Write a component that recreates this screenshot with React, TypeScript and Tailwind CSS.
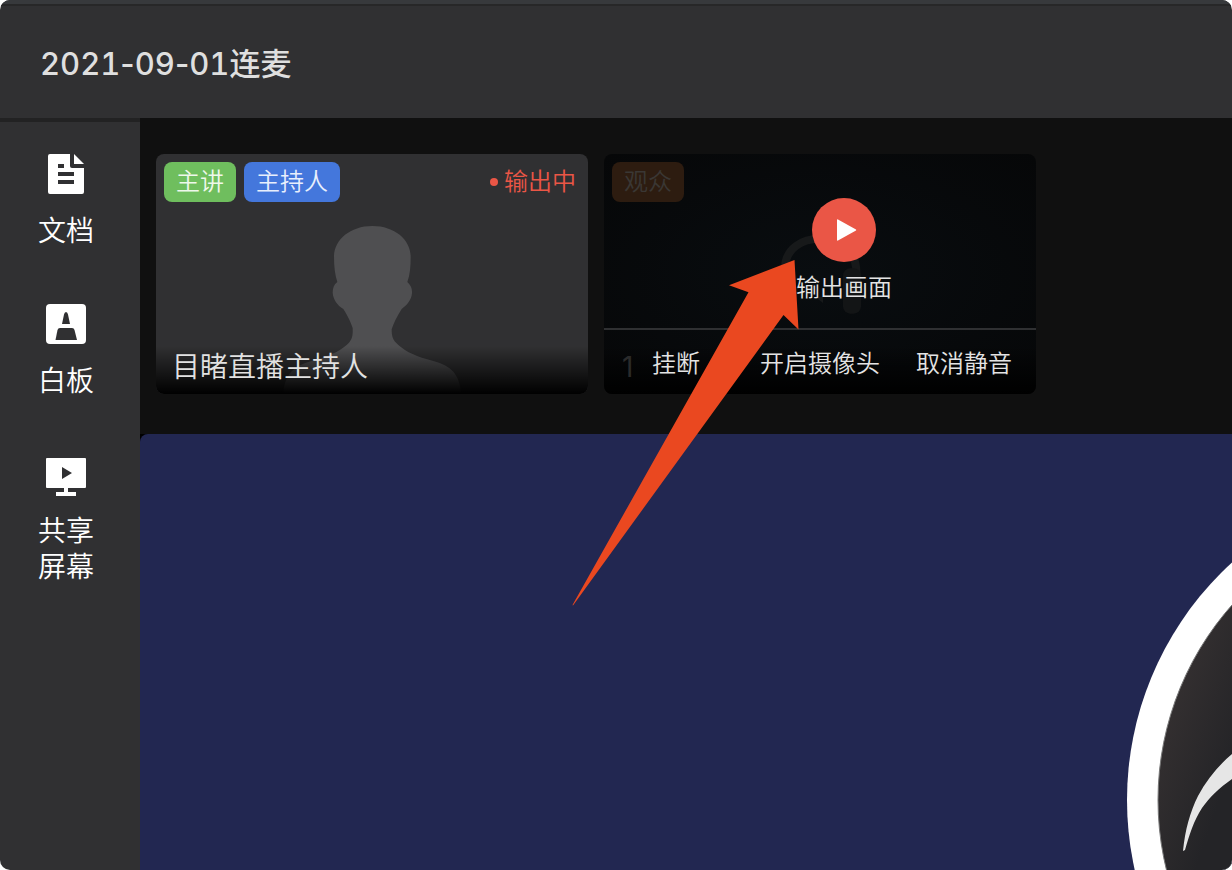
import type { ReactNode } from 'react';

function DocumentIcon() {
  return (
    <svg viewBox="0 0 40 40" className="h-10 w-10" fill="#fff" aria-hidden="true">
      <path
        fillRule="evenodd"
        d="M4 0H24V12Q24 14 26 14H38V38Q38 40 36 40H4Q2 40 2 38V2Q2 0 4 0ZM12 10V14H18V10ZM12 18V22H28V18ZM12 26V30H28V26Z"
      />
      <path d="M28 0L38 10H28Z" />
    </svg>
  );
}

function WhiteboardIcon() {
  return (
    <svg viewBox="0 0 40 40" className="h-10 w-10" aria-hidden="true">
      <rect width="40" height="40" rx="4" fill="#fff" />
      <path d="M16 20L18 10.500Q18.500 8 20 8Q21.500 8 22 10.500L24 20Z" fill="#303032" />
      <path d="M9.500 36L11.500 26Q12 24 14 24H26Q28 24 28.500 26L31 36Z" fill="#303032" />
    </svg>
  );
}

function ScreenIcon() {
  return (
    <svg viewBox="0 0 40 40" className="h-10 w-10 overflow-visible" fill="#fff" aria-hidden="true">
      <path
        fillRule="evenodd"
        d="M1 4H39Q40 4 40 5V33Q40 34 39 34H22V38H30V42H10V38H18V34H1Q0 34 0 33V5Q0 4 1 4ZM16 13V25L26 19Z"
      />
    </svg>
  );
}

function Tool({ icon, children }: { icon: ReactNode; children: ReactNode }) {
  return (
    <button type="button" className="flex w-[132px] flex-col items-center gap-[19px] text-[28px] leading-9 font-[350] text-white">
      {icon}
      <span>{children}</span>
    </button>
  );
}

function Tag({ className, children }: { className: string; children: ReactNode }) {
  return <span className={`flex h-10 items-center rounded-lg px-3 text-2xl font-[350] ${className}`}>{children}</span>;
}

function HostCard() {
  return (
    <article className="relative h-60 w-[432px] shrink-0 overflow-hidden rounded-lg bg-[#303032]">
      <svg viewBox="18 27 1296 720" className="absolute inset-0 h-full w-full" aria-hidden="true">
        <path
          fill="#4f4f51"
          d="M667 243C735 243 782 285 782 335C782 365 780 390 772 411C782 420 787 430 786 445C784 465 772 480 755 492C740 515 730 537 725 553C725 575 728 585 745 600C770 622 800 635 850 648C905 662 930 690 933 747H400C403 690 430 662 485 648C530 635 565 622 590 600C606 585 609 575 608 549C602 532 595 515 580 492C562 480 550 465 548 443C548 430 552 418 562 411C555 390 552 365 552 335C552 285 600 243 667 243Z"
        />
      </svg>
      <div className="relative flex items-center gap-2 p-2">
        <Tag className="bg-[#6fbe5e] text-[#eef8eb]">主讲</Tag>
        <Tag className="bg-[#4477dc] text-[#e8effc]">主持人</Tag>
        <span className="ml-auto flex items-center gap-1.5 pr-1 text-2xl font-[350] text-[#ea5646]">
          <i className="h-2 w-2 rounded-full bg-[#ea5646]" />
          输出中
        </span>
      </div>
      <div className="absolute inset-x-0 bottom-0 h-12 bg-linear-to-b from-transparent to-black px-4 text-[28px] leading-[42px] font-[350] text-[#e2e2e2]">
        目睹直播主持人
      </div>
    </article>
  );
}

function AudienceCard() {
  return (
    <article className="relative flex h-60 w-[432px] shrink-0 flex-col overflow-hidden rounded-lg bg-radial from-[#090d10] to-[#060708]">
      <svg viewBox="27 27 1296 720" className="absolute inset-0 h-full w-full" aria-hidden="true">
        <path d="M570 380V370C570 250 784 250 784 380V400" fill="none" stroke="#17191a" strokeWidth="24" />
        <rect x="744" y="370" width="54" height="136" rx="22" fill="#131516" />
        <path d="M660 455H684V474Z" fill="#17191a" />
      </svg>
      <div className="absolute inset-x-0 bottom-0 h-12 bg-linear-to-b from-transparent to-black px-[18px] text-[28px] leading-[42px] text-[#2b2b2b]">
        1
      </div>
      <div className="absolute top-2 left-2">
        <Tag className="bg-[#2d1c10] text-[#3a3734]">观众</Tag>
      </div>
      <div className="relative flex flex-1 flex-col items-center pt-11 pl-12">
        <button type="button" className="flex flex-col items-center gap-2 text-2xl leading-9 font-[350] text-[#e4e4e4]">
          <span className="flex h-16 w-16 items-center justify-center rounded-full bg-[#ea5646]">
            <svg viewBox="0 0 64 64" className="h-16 w-16" aria-hidden="true">
              <path d="M26 21.500L44 31.500Q44.500 32 44 32.500L26 42.500Q25 43 25 42V22Q25 21 26 21.500Z" fill="#fff" />
            </svg>
          </span>
          输出画面
        </button>
      </div>
      <div className="relative grid h-[66px] grid-cols-3 border-t-2 border-[#2f3032] pt-1 text-2xl font-[350] text-[#e4e4e4]">
        <button type="button">挂断</button>
        <button type="button" className="whitespace-nowrap">开启摄像头</button>
        <button type="button">取消静音</button>
      </div>
    </article>
  );
}

function Stage() {
  return (
    <section className="flex flex-1 bg-black">
      <div className="flex flex-1 justify-end overflow-hidden rounded-tl-lg bg-[#222751]">
        <svg viewBox="1112 434 120 436" className="h-[436px] w-[120px]" aria-hidden="true">
          <defs>
            <linearGradient id="disc" gradientUnits="userSpaceOnUse" x1="1160" y1="740" x2="1232" y2="765">
              <stop offset="0" stopColor="#332f30" />
              <stop offset="1" stopColor="#242427" />
            </linearGradient>
          </defs>
          <circle cx="1448" cy="800" r="321" fill="#fff" />
          <circle cx="1452" cy="800" r="294" fill="url(#disc)" stroke="#777" strokeWidth="1" />
          <path d="M1183 851C1185 830 1190 812 1198 796C1207 779 1219 765 1232 754V779C1219 788 1210 797 1202 808C1194 820 1189 836 1185 850Z" fill="#e6e6e6" />
        </svg>
      </div>
    </section>
  );
}

export default function App() {
  return (
    <div className="bg-white">
      <div className="flex min-h-screen flex-col overflow-hidden rounded-[10px] bg-[#303032] font-['Inter','Noto_Sans_CJK_SC',sans-serif]">
        <div className="h-1.5 border-b-2 border-[#272728] bg-[#37393c]" />
        <header className="flex h-28 items-center px-10 pt-1">
          <h1 className="text-[31px] font-medium text-[#dfdfdf]">
            <span className="tabular-nums">2021</span>-<span className="tabular-nums">09</span>-
            <span className="tabular-nums">01</span>连麦
          </h1>
        </header>
        <div className="flex flex-1">
          <nav className="flex w-[140px] shrink-0 flex-col gap-[55px] border-t-4 border-[#222223] pt-8">
            <Tool icon={<DocumentIcon />}>文档</Tool>
            <Tool icon={<WhiteboardIcon />}>白板</Tool>
            <Tool icon={<ScreenIcon />}>
              共享
              <br />
              屏幕
            </Tool>
          </nav>
          <main className="relative flex min-w-0 flex-1 flex-col bg-[#101010]">
            <div className="flex gap-4 px-4 pt-9 pb-10">
              <HostCard />
              <AudienceCard />
            </div>
            <Stage />
            <svg
              viewBox="572 260 227 346"
              className="pointer-events-none absolute top-[142px] left-[432px] h-[346px] w-[227px]"
              aria-hidden="true"
            >
              <path d="M794.500 260L798.500 329.500L783.500 315L573 605.500L572.500 605L748.500 292.300L729 285.200Z" fill="#ea4820" />
            </svg>
          </main>
        </div>
      </div>
    </div>
  );
}
